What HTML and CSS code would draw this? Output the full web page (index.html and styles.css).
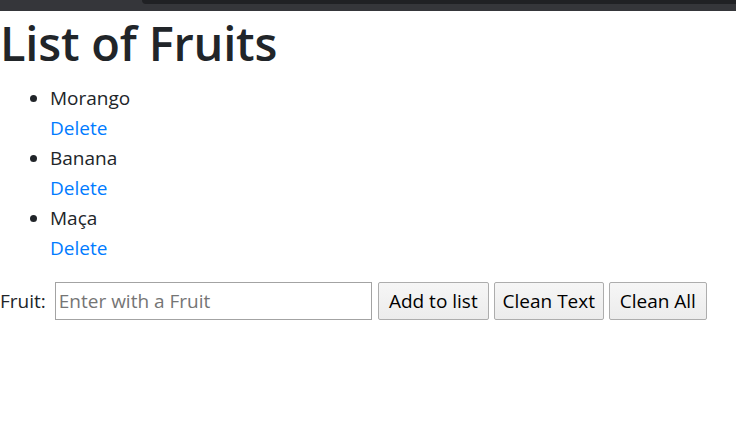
FILE: index.html
```html
<!DOCTYPE html>
<html lang="en">
<head>
<meta charset="utf-8">
<title>List of Fruits</title>
<link rel="stylesheet" href="styles.css">
</head>
<body>
<div class="chrome">
  <div class="chrome-left"></div>
  <div class="chrome-tab"></div>
</div>
<h1 class="title">List of Fruits</h1>
<ul class="fruits">
  <li>Morango<br><a href="#" class="delete">Delete</a></li>
  <li>Banana<br><a href="#" class="delete">Delete</a></li>
  <li>Maça<br><a href="#" class="delete">Delete</a></li>
</ul>
<form class="fruit-form">
  <label class="fruit-label" for="fruit">Fruit:</label>
  <input class="fruit-input" id="fruit" type="text" placeholder="Enter with a Fruit">
  <button type="button" class="btn btn-add">Add to list</button>
  <button type="button" class="btn btn-text">Clean Text</button>
  <button type="button" class="btn btn-all">Clean All</button>
</form>
</body>
</html>
```
FILE: styles.css
```css
html, body {
  margin: 0;
  padding: 0;
  background: #ffffff;
}
body {
  font-family: "Open Sans", "Noto Sans", sans-serif;
  font-size: 19px;
  line-height: 30px;
  color: #212529;
}
.chrome {
  display: flex;
  height: 11px;
  background: #35363a;
}
.chrome-left {
  width: 142px;
}
.chrome-tab {
  flex: 1;
  height: 4px;
  background: #202124;
  border-bottom-left-radius: 8px;
}
.title {
  margin: 2px 0 10px 0;
  font-size: 47px;
  font-weight: 600;
  line-height: 60px;
  letter-spacing: -0.2px;
  color: #212529;
}
.fruits {
  margin: 0 0 19px 0;
  padding-left: 50px;
}
.fruits li {
  line-height: 30px;
}
.delete {
  color: #007bff;
  text-decoration: none;
}
.fruit-form {
  display: flex;
  align-items: center;
  margin: 0;
}
.fruit-label {
  margin-right: 9px;
}
.fruit-input {
  box-sizing: border-box;
  width: 317px;
  height: 38px;
  margin: 0 6px 0 0;
  padding: 0 3px;
  border: 1px solid #a3a3a3;
  border-radius: 0;
  font-family: inherit;
  font-size: 19px;
  color: #212529;
}
.fruit-input::placeholder {
  color: #757575;
}
.btn {
  box-sizing: border-box;
  height: 38px;
  margin: 0 5px 0 0;
  padding: 0;
  border: 1px solid #adadad;
  border-radius: 2px;
  background: linear-gradient(#f6f6f6, #ececec);
  font-family: inherit;
  font-size: 19px;
  color: #000000;
}
.btn-add {
  width: 111px;
}
.btn-text {
  width: 110px;
}
.btn-all {
  width: 98px;
}
```
